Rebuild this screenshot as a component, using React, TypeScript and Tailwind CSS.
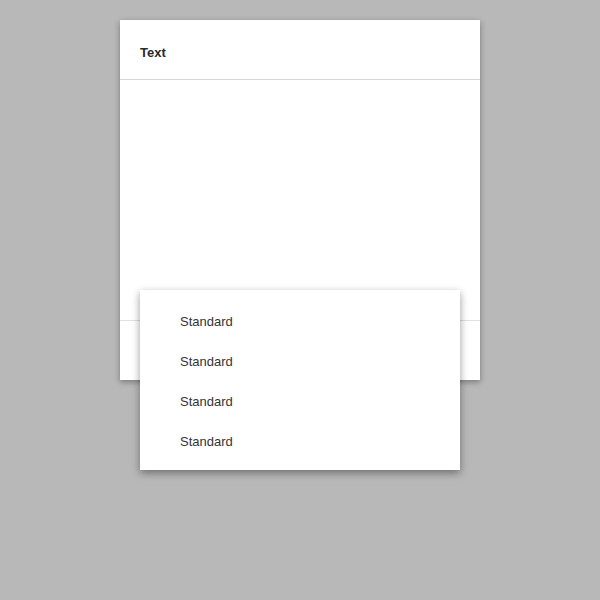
export default function App() {
  const items = ["Standard", "Standard", "Standard", "Standard"];
  return (
    <div className="min-h-screen w-full bg-[#b8b8b8] pt-5 font-['Liberation_Sans',Arial,sans-serif]">
      <div className="relative mx-auto flex h-[360px] w-[360px] flex-col bg-white shadow-[0_2px_6px_rgba(0,0,0,0.35)]">
        <div className="h-[60px] border-b border-[#d6d6d6] px-5 pt-[25px]">
          <span className="block text-[13px] font-bold leading-[15px] text-[#2a2a2a]">Text</span>
        </div>
        <div className="flex-1" />
        <div className="h-[60px] border-t border-[#e0e0e0]" />

        <div className="absolute left-5 top-[270px] w-[320px] bg-white pt-3 pb-2 shadow-[0_3px_8px_rgba(0,0,0,0.4)]">
          {items.map((label, i) => (
            <div key={i} className="flex h-10 items-center pl-10 text-[13px] text-[#333]">
              {label}
            </div>
          ))}
        </div>
      </div>
    </div>
  );
}
